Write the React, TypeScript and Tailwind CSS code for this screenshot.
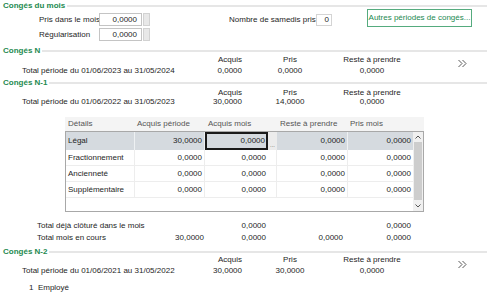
import React from "react";

const rows = [
  { name: "Légal", ap: "30,0000", selected: true },
  { name: "Fractionnement", ap: "0,0000" },
  { name: "Ancienneté", ap: "0,0000" },
  { name: "Supplémentaire", ap: "0,0000" },
];

function SectionTitle({ title, className = "" }: { title: string; className?: string }) {
  return (
    <div className={"flex items-center " + className}>
      <span className="whitespace-nowrap pl-[3px] pr-[2px] font-bold text-[#23894f]">{title}</span>
      <div className="h-[2px] flex-1 bg-[#e6e6e6]" />
    </div>
  );
}

function Chevrons() {
  return (
    <svg width="11" height="9" viewBox="0 0 11 9" fill="none" stroke="#5a5a5a" strokeWidth="1">
      <path d="M1.5 1 L5 4.5 L1.5 8 M5.5 1 L9 4.5 L5.5 8" />
    </svg>
  );
}

function Period({
  label,
  acquis,
  pris,
  chevron,
  headH,
  valH,
  valMt,
}: {
  label: string;
  acquis: string;
  pris: string;
  chevron?: boolean;
  headH: string;
  valH: string;
  valMt: string;
}) {
  return (
    <div className="flex">
      <div className="w-[457px]">
        <div className={"flex items-center " + headH}>
          <div className="w-[200px]" />
          <div className="w-[42px] text-right">Acquis</div>
          <div className="w-[28px]" />
          <div className="w-[40px] text-center">Pris</div>
          <div className="w-[20px]" />
          <div className="w-[84px] text-center">Reste à prendre</div>
        </div>
        <div className={"flex items-center " + valH + " " + valMt}>
          <div className="w-[22px]" />
          <div className="w-[178px] whitespace-nowrap">{label}</div>
          <div className="w-[42px] text-right">{acquis}</div>
          <div className="w-[28px]" />
          <div className="w-[40px] text-center">{pris}</div>
          <div className="w-[20px]" />
          <div className="w-[84px] text-center">0,0000</div>
        </div>
      </div>
      {chevron && (
        <div className="pt-[4px]">
          <Chevrons />
        </div>
      )}
    </div>
  );
}

function Arrow({ up }: { up?: boolean }) {
  return (
    <svg width="6" height="4" viewBox="0 0 6 4" fill="none" stroke="#555" strokeWidth="1">
      <path d={up ? "M0.5 3.5 L3 1 L5.5 3.5" : "M0.5 0.5 L3 3 L5.5 0.5"} />
    </svg>
  );
}

export default function App() {
  return (
    <div className="h-[294px] w-[487px] overflow-hidden bg-white font-['Liberation_Sans',Arial,sans-serif] text-[8px] leading-none text-[#1e1e1e]">
      {/* Congés du mois */}
      <SectionTitle title="Congés du mois" className="h-[12px]" />
      <div className="mt-[-3px] flex">
        <div className="w-[367px] pt-[4px]">
          <div className="flex h-[13px] items-center">
            <div className="w-[39px]" />
            <div className="w-[60px] whitespace-nowrap">Pris dans le mois</div>
            <div className="flex h-[13px] w-[43px] items-center justify-end border border-[#c4c4c4] bg-white pr-[4px]">0,0000</div>
            <div className="ml-[1px] h-[13px] w-[7px] border border-[#d2d2d2] bg-[#e8e8e8]" />
            <div className="w-[79px]" />
            <div className="w-[87px] whitespace-nowrap">Nombre de samedis pris</div>
            <div className="flex h-[12px] w-[16px] items-center justify-end border border-[#d4d4d4] pr-[2px]">0</div>
          </div>
          <div className="mt-[2px] flex h-[13px] items-center">
            <div className="w-[39px]" />
            <div className="w-[60px] whitespace-nowrap">Régularisation</div>
            <div className="flex h-[13px] w-[43px] items-center justify-end border border-[#c4c4c4] bg-white pr-[4px]">0,0000</div>
            <div className="ml-[1px] h-[13px] w-[7px] border border-[#d2d2d2] bg-[#e8e8e8]" />
          </div>
        </div>
        <button className="flex h-[18px] w-[105px] items-center justify-center whitespace-nowrap border border-[#55ab7e] bg-white px-[1px] text-[#23894f]">
          Autres périodes de congés...
        </button>
      </div>

      {/* Congés N */}
      <SectionTitle title="Congés N" className="mt-[6px] h-[8px]" />
      <Period
        label="Total période du 01/06/2023 au 31/05/2024"
        acquis="0,0000"
        pris="0,0000"
        chevron
        headH="h-[9px]"
        valH="h-[12px]"
        valMt="mt-[1px]"
      />

      {/* Congés N-1 */}
      <SectionTitle title="Congés N-1" className="mt-[1px] h-[10px]" />
      <Period
        label="Total période du 01/06/2022 au 31/05/2023"
        acquis="30,0000"
        pris="14,0000"
        headH="h-[9px]"
        valH="h-[10px]"
        valMt=""
      />

      {/* tableau */}
      <div className="ml-[65px] mt-[10px] w-[359px]">
        <div className="flex h-[14px] items-center bg-[#f4f4f4] text-[#555]">
          <div className="w-[70px] pl-[3px]">Détails</div>
          <div className="w-[70px] pl-[2px]">Acquis période</div>
          <div className="w-[72px] pl-[3px]">Acquis mois</div>
          <div className="w-[71px] pl-[3px]">Reste à prendre</div>
          <div className="w-[65px] pl-[2px]">Pris mois</div>
        </div>
        <div className="flex h-[81px] border border-[#a8a8a8]">
          <div className="w-[347px]">
            {rows.map((r) =>
              r.selected ? (
                <div key={r.name} className="flex h-[18px] bg-[#d5dadf]">
                  <div className="flex w-[69px] items-center border-r border-[#eef1f3] pl-[2px]">{r.name}</div>
                  <div className="flex w-[70px] items-center justify-end border-r border-[#eef1f3] pr-[2px]">{r.ap}</div>
                  <div className="flex w-[63px] items-center justify-end border-2 border-[#1a1a1a] pr-[1px]">0,0000</div>
                  <div className="flex w-[9px] items-end justify-center bg-[#ececec] pb-[2px] text-[6px] text-[#555]">...</div>
                  <div className="flex w-[71px] items-center justify-end border-r border-[#eef1f3] pr-[2px]">0,0000</div>
                  <div className="flex w-[65px] items-center justify-end pr-[2px]">0,0000</div>
                </div>
              ) : (
                <div key={r.name} className="flex h-[16px] border-b border-[#ededed]">
                  <div className="flex w-[69px] items-center border-r border-[#ededed] pl-[2px]">{r.name}</div>
                  <div className="flex w-[70px] items-center justify-end border-r border-[#ededed] pr-[2px]">{r.ap}</div>
                  <div className="flex w-[72px] items-center justify-end border-r border-[#ededed] pr-[10px]">0,0000</div>
                  <div className="flex w-[71px] items-center justify-end border-r border-[#ededed] pr-[2px]">0,0000</div>
                  <div className="flex w-[65px] items-center justify-end pr-[2px]">0,0000</div>
                </div>
              )
            )}
          </div>
          <div className="flex w-[10px] flex-col bg-[#f0f0f0]">
            <div className="flex h-[10px] items-center justify-center">
              <Arrow up />
            </div>
            <div className="mx-[1px] flex-1 bg-[#cdcdcd]" />
            <div className="flex h-[11px] items-center justify-center">
              <Arrow />
            </div>
          </div>
        </div>
      </div>

      {/* totaux du mois */}
      <div className="mt-[8px] flex h-[12px] items-center">
        <div className="w-[37px]" />
        <div className="w-[98px] whitespace-nowrap">Total déjà clôturé dans le mois</div>
        <div className="w-[70px]" />
        <div className="w-[63px] pr-[2px] text-right">0,0000</div>
        <div className="w-[9px]" />
        <div className="w-[71px]" />
        <div className="w-[65px] pr-[2px] text-right">0,0000</div>
      </div>
      <div className="flex h-[12px] items-center">
        <div className="w-[37px]" />
        <div className="w-[98px] whitespace-nowrap">Total mois en cours</div>
        <div className="w-[70px] pr-[1px] text-right">30,0000</div>
        <div className="w-[63px] pr-[2px] text-right">0,0000</div>
        <div className="w-[9px]" />
        <div className="w-[71px] pr-[5px] text-right">0,0000</div>
        <div className="w-[65px] pr-[2px] text-right">0,0000</div>
      </div>

      {/* Congés N-2 */}
      <SectionTitle title="Congés N-2" className="mt-[3px] h-[9px]" />
      <Period
        label="Total période du 01/06/2021 au 31/05/2022"
        acquis="30,0000"
        pris="30,0000"
        chevron
        headH="h-[8px]"
        valH="h-[12px]"
        valMt="mt-[1px]"
      />

      <div className="mt-[5px] flex h-[12px] items-center pl-[29px]">1&nbsp;&nbsp;Employé</div>
    </div>
  );
}
